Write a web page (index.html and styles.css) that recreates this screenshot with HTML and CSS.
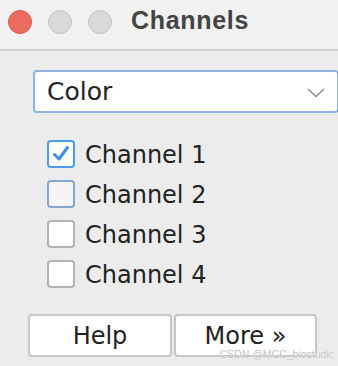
FILE: index.html
```html
<!DOCTYPE html>
<html>
<head>
<meta charset="utf-8">
<link rel="stylesheet" href="styles.css">
</head>
<body>
<div class="window">
  <div class="titlebar">
    <div class="lights">
      <span class="light close"></span>
      <span class="light"></span>
      <span class="light"></span>
    </div>
    <div class="title">Channels</div>
  </div>
  <div class="content">
    <div class="select">
      <span class="select-text">Color</span>
      <svg class="chevron" width="18" height="10" viewBox="0 0 18 10"><path d="M1 1 L9 8.5 L17 1" fill="none" stroke="#8a8a8a" stroke-width="1.4"/></svg>
    </div>
    <div class="checks">
      <label class="check">
        <span class="box checked">
          <svg width="22" height="22" viewBox="0 0 22 22"><path d="M4.5 11.5 L9 16 L17.5 4.5" fill="none" stroke="#3d8fe6" stroke-width="3" stroke-linecap="round" stroke-linejoin="round"/></svg>
        </span>
        <span class="label">Channel 1</span>
      </label>
      <label class="check">
        <span class="box focus"></span>
        <span class="label">Channel 2</span>
      </label>
      <label class="check">
        <span class="box"></span>
        <span class="label">Channel 3</span>
      </label>
      <label class="check">
        <span class="box"></span>
        <span class="label">Channel 4</span>
      </label>
    </div>
    <div class="buttons">
      <div class="btn help">Help</div>
      <div class="btn more">More »</div>
    </div>
    <div class="watermark">CSDN @MCC_biostudic</div>
  </div>
</div>
</body>
</html>
```
FILE: styles.css
```css
html, body {
  margin: 0;
  padding: 0;
  background: #ececec;
}
.window {
  width: 338px;
  height: 366px;
  position: relative;
  overflow: hidden;
  font-family: "DejaVu Sans", sans-serif;
  color: #222;
}
.titlebar {
  height: 49px;
  background: #f0f1f0;
  border-bottom: 2px solid #d3d3d3;
  display: flex;
  align-items: flex-start;
}
.lights {
  display: flex;
  gap: 16px;
  padding: 10px 0 0 8px;
}
.light {
  width: 22px;
  height: 22px;
  border-radius: 50%;
  background: #d8d9d8;
  border: 1px solid #c2c3c2;
}
.light.close {
  background: #ed6a5e;
  border-color: #d5574c;
}
.title {
  margin-left: 19px;
  padding-top: 6px;
  font-family: "Liberation Sans", Arial, sans-serif;
  font-weight: bold;
  font-size: 25px;
  letter-spacing: 0.7px;
  color: #444;
}
.content {
  padding: 19px 0 0 0;
}
.select {
  margin-left: 33px;
  width: 278px;
  height: 39px;
  border: 2px solid #8db5df;
  border-radius: 4px;
  background: #fff;
  display: flex;
  align-items: center;
  justify-content: space-between;
  padding: 0 12px 0 12px;
}
.select-text {
  font-size: 25px;
  color: #222;
}
.chevron {
  margin-top: 2px;
}
.checks {
  margin-top: 27px;
  margin-left: 47px;
  display: flex;
  flex-direction: column;
  gap: 12px;
}
.check {
  display: flex;
  align-items: center;
  height: 28px;
}
.box {
  width: 24px;
  height: 24px;
  border: 2px solid #b3b3b3;
  border-radius: 4px;
  background: #fff;
  display: flex;
  align-items: center;
  justify-content: center;
}
.box.checked {
  border-color: #4b9bec;
}
.box.focus {
  border-color: #82a6cc;
  background: #f5f5f5;
}
.label {
  margin-left: 10px;
  margin-top: 2px;
  font-size: 24px;
  color: #222;
}
.buttons {
  margin-top: 26px;
  margin-left: 28px;
  display: flex;
  gap: 2px;
}
.btn {
  height: 39px;
  border: 2px solid #c6c6c6;
  border-radius: 4px;
  background: #fff;
  display: flex;
  align-items: center;
  justify-content: center;
  font-size: 24px;
  color: #222;
}
.help { width: 140px; }
.more { width: 139px; }
.watermark {
  position: absolute;
  right: 4px;
  top: 348px;
  font-family: "Liberation Sans", Arial, sans-serif;
  font-size: 10.5px;
  color: #c4c4c4;
  text-shadow: 0 0 1px #fff;
}
```
